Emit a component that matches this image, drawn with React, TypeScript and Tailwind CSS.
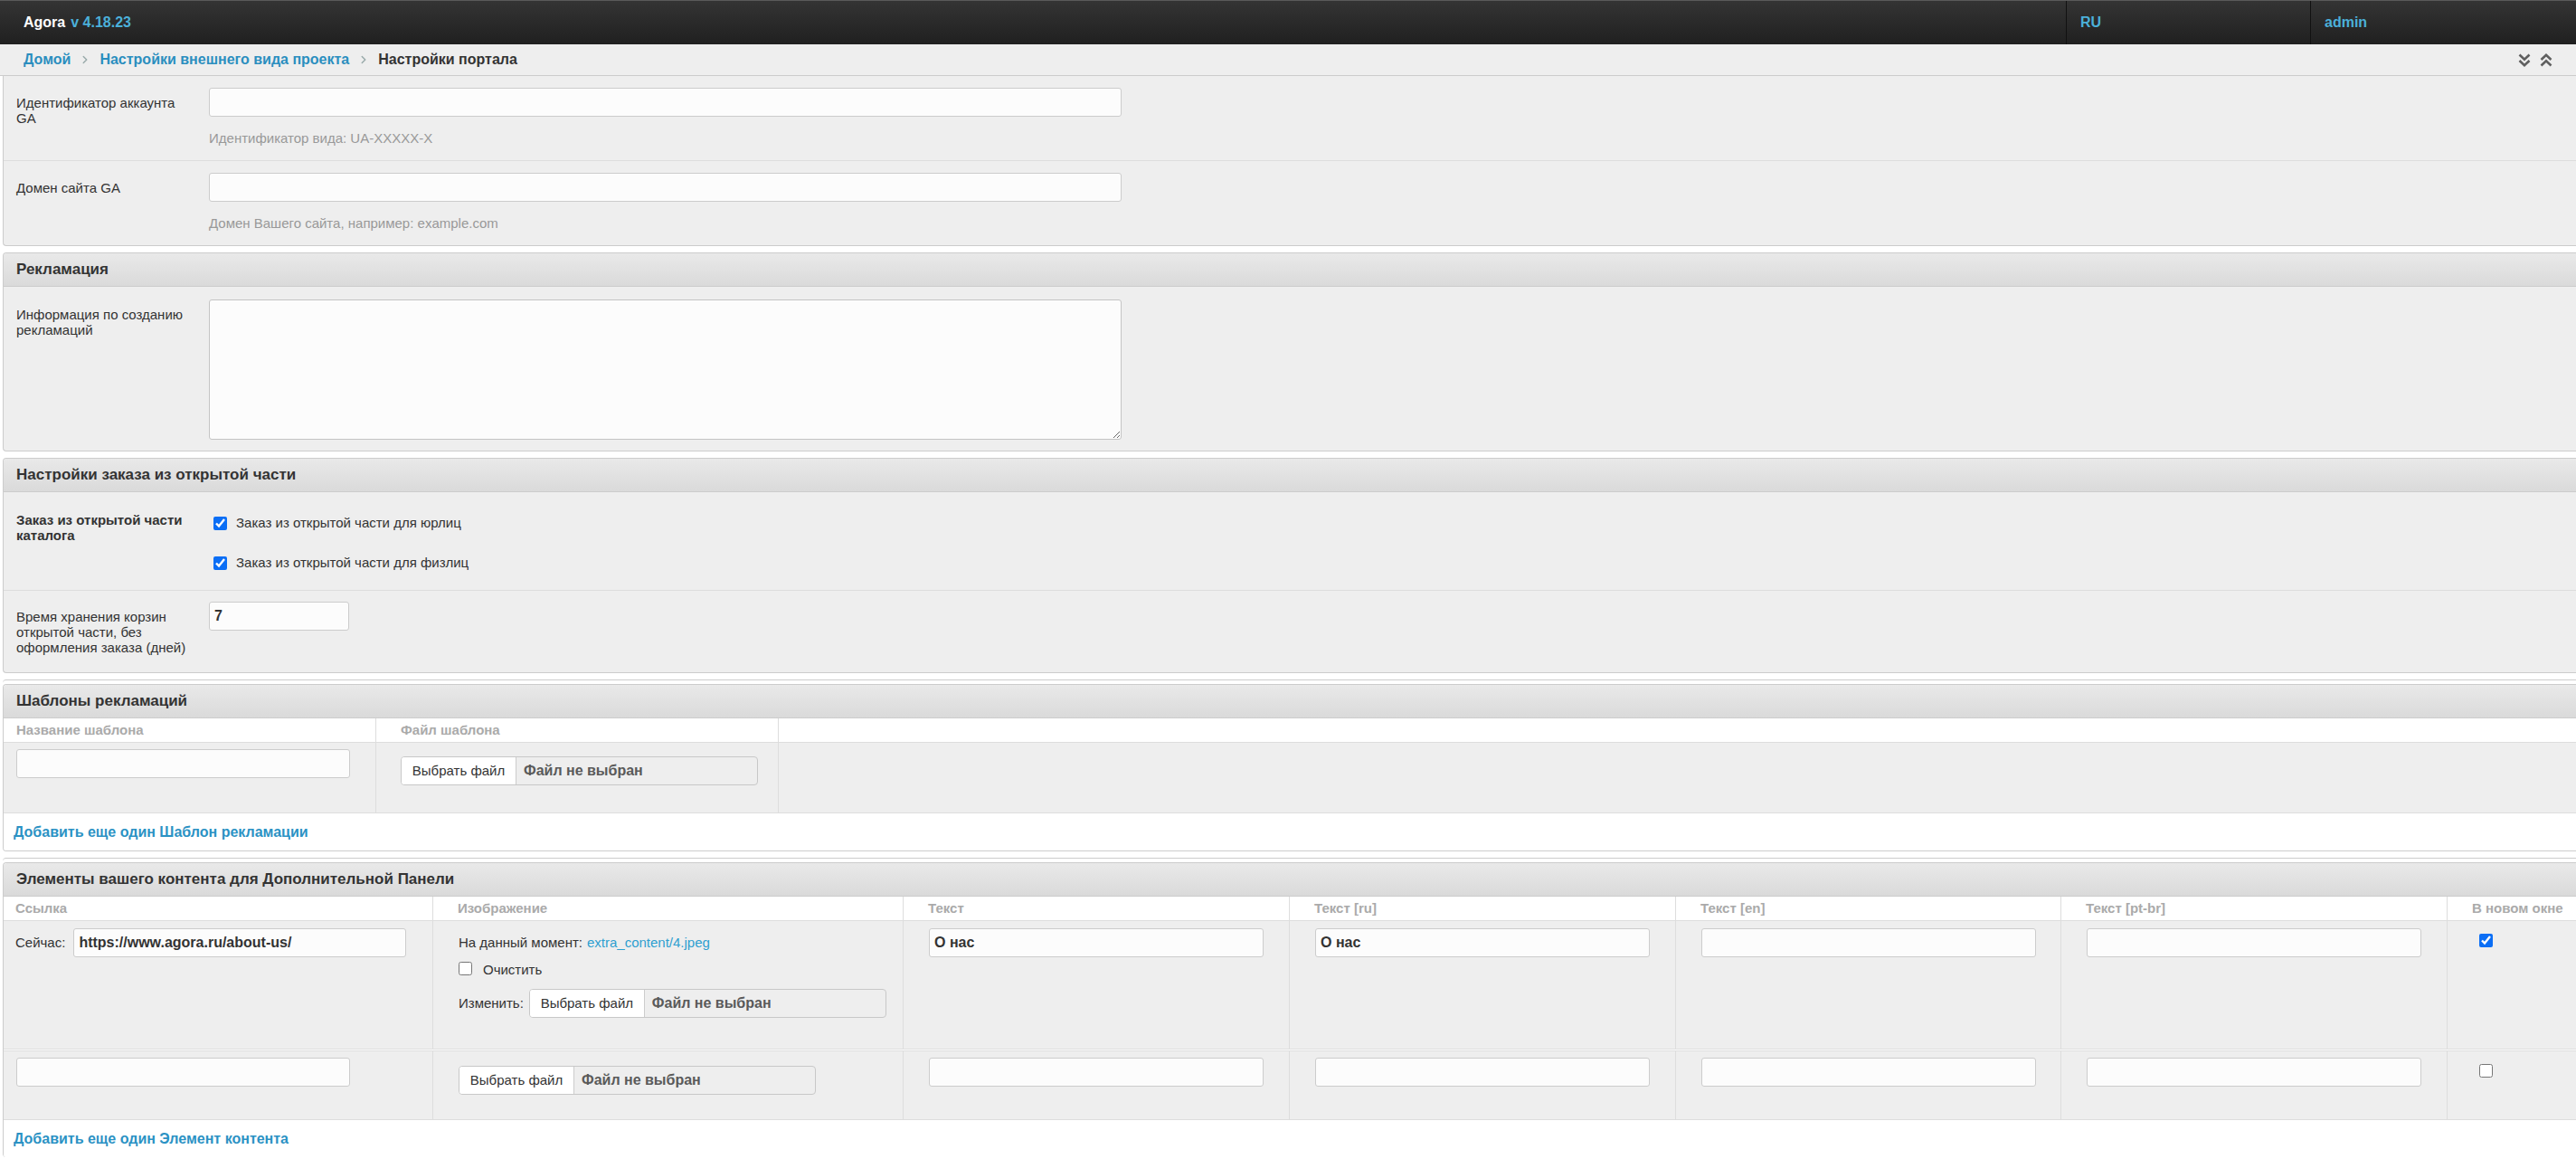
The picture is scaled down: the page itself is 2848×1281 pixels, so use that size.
import React from 'react';
import { ChevronRight } from 'lucide-react';

const Field: React.FC<{ value?: string; className?: string }> = ({ value = '', className = '' }) => (
  <input
    readOnly
    value={value}
    className={`h-[32px] rounded-[3px] border border-[#ccc] bg-[#fcfcfc] px-[5px] text-[16px] font-bold text-[#333] outline-none ${className}`}
  />
);

const FileField: React.FC = () => (
  <div className="flex h-[32px] w-[395px] overflow-hidden rounded-[4px] border border-[#c8c8c8] bg-[#eee]">
    <span className="flex w-[127px] items-center justify-center border-r border-[#ccc] bg-white text-[15px] text-[#333]">
      Выбрать файл
    </span>
    <span className="flex items-center pl-[8px] text-[16px] font-bold text-[#5a5a5a]">Файл не выбран</span>
  </div>
);

const Check: React.FC<{ checked?: boolean }> = ({ checked }) => (
  <input type="checkbox" readOnly checked={!!checked} className="h-[15px] w-[15px] shrink-0 accent-[#0b6ef5]" />
);

// double chevron, drawn as two polylines
const DoubleChevron: React.FC<{ up?: boolean }> = ({ up }) => (
  <svg width="14" height="15" viewBox="0 0 14 15" fill="none" stroke="#5f5f5f" strokeWidth="2.6" strokeLinejoin="miter">
    {up ? (
      <>
        <polyline points="1.5,7 7,1.8 12.5,7" />
        <polyline points="1.5,13.5 7,8.3 12.5,13.5" />
      </>
    ) : (
      <>
        <polyline points="1.5,1.5 7,6.7 12.5,1.5" />
        <polyline points="1.5,8 7,13.2 12.5,8" />
      </>
    )}
  </svg>
);

const PanelHeader: React.FC<{ title: string }> = ({ title }) => (
  <div className="flex h-[37px] items-center border-b border-[#ccc] bg-gradient-to-b from-[#e9e9e9] to-[#dadada] pl-[14px] text-[17px] font-bold text-[#333]">
    {title}
  </div>
);

const FormRow: React.FC<{ label: React.ReactNode; bold?: boolean; className?: string; children: React.ReactNode }> = ({
  label,
  bold,
  className = '',
  children,
}) => (
  <div className={`flex ${className}`}>
    <div className={`w-[227px] shrink-0 pl-[14px] pr-[23px] pt-[8px] text-[15px] leading-[17px] text-[#333] ${bold ? 'font-bold' : ''}`}>
      {label}
    </div>
    <div className="w-[1009px]">{children}</div>
  </div>
);

const Help: React.FC<{ children: React.ReactNode }> = ({ children }) => (
  <p className="mt-[15px] text-[15px] leading-[17px] text-[#999]">{children}</p>
);

const AddLink: React.FC<{ children: React.ReactNode }> = ({ children }) => (
  <div className="flex h-[41px] items-center bg-white pl-[11px]">
    <a className="text-[16px] font-bold text-[#2b92c4]">{children}</a>
  </div>
);

const contentCols = ['Ссылка', 'Изображение', 'Текст', 'Текст [ru]', 'Текст [en]', 'Текст [pt-br]', 'В новом окне'];

const App: React.FC = () => {
  return (
    <div className="min-h-screen bg-white font-['Liberation_Sans',Arial,sans-serif] text-[#333]">
      {/* top bar */}
      <header className="flex h-[49px] border-t border-[#5a5a5a] bg-gradient-to-b from-[#343434] to-[#202020]">
        <div className="flex flex-1 items-center pl-[26px] text-[16px] font-bold">
          <span className="text-white">Agora</span>
          <span className="ml-[6px] text-[#4bb0da]">v 4.18.23</span>
        </div>
        <div className="flex w-[270px] items-center border-l border-[#111] pl-[15px] text-[16px] font-bold text-[#4bb0da]">RU</div>
        <div className="flex w-[294px] items-center border-l border-[#111] pl-[15px] text-[16px] font-bold text-[#4bb0da]">admin</div>
      </header>

      {/* breadcrumbs */}
      <nav className="flex h-[35px] items-center border-b border-[#ccc] bg-[#eee] pl-[26px] pr-[26px] text-[16px] font-bold">
        <a className="text-[#2b8ebf]">Домой</a>
        <ChevronRight className="mx-[9px] h-[14px] w-[14px] text-[#9aa]" strokeWidth={2.5} />
        <a className="text-[#2b8ebf]">Настройки внешнего вида проекта</a>
        <ChevronRight className="mx-[9px] h-[14px] w-[14px] text-[#9aa]" strokeWidth={2.5} />
        <span className="text-[#333]">Настройки портала</span>
        <div className="ml-auto flex items-center gap-[10px]">
          <DoubleChevron />
          <DoubleChevron up />
        </div>
      </nav>

      <main className="pl-[3px]">
        {/* GA */}
        <section className="rounded-bl-[4px] border-b border-l border-[#ccc] bg-[#eee]">
          <FormRow label="Идентификатор аккаунта GA" className="border-b border-[#ddd] pb-[16px] pt-[13px]">
            <Field className="w-full" />
            <Help>Идентификатор вида: UA-XXXXX-X</Help>
          </FormRow>
          <FormRow label="Домен сайта GA" className="pb-[16px] pt-[13px]">
            <Field className="w-full" />
            <Help>Домен Вашего сайта, например: example.com</Help>
          </FormRow>
        </section>

        {/* Рекламация */}
        <section className="mt-[7px] overflow-hidden rounded-l-[4px] border-y border-l border-[#ccc] bg-[#eee]">
          <PanelHeader title="Рекламация" />
          <FormRow label="Информация по созданию рекламаций" className="pb-[12px] pt-[14px]">
            <textarea readOnly className="block h-[155px] w-full rounded-[3px] border border-[#c4c4c4] bg-[#fcfcfc] outline-none" />
          </FormRow>
        </section>

        {/* Настройки заказа */}
        <section className="mt-[7px] overflow-hidden rounded-l-[4px] border-y border-l border-[#ccc] bg-[#eee]">
          <PanelHeader title="Настройки заказа из открытой части" />
          <FormRow label="Заказ из открытой части каталога" bold className="border-b border-[#ddd] pb-[19px] pt-[14px]">
            <div className="flex flex-col gap-[22px] pt-[9px] text-[15px] text-[#333]">
              <label className="flex h-[22px] items-center gap-[10px] pl-[5px]">
                <Check checked />
                Заказ из открытой части для юрлиц
              </label>
              <label className="flex h-[22px] items-center gap-[10px] pl-[5px]">
                <Check checked />
                Заказ из открытой части для физлиц
              </label>
            </div>
          </FormRow>
          <FormRow label="Время хранения корзин открытой части, без оформления заказа (дней)" className="pb-[19px] pt-[12px]">
            <Field value="7" className="w-[155px]" />
          </FormRow>
        </section>

        {/* Шаблоны рекламаций */}
        <div className="mt-[7px] rounded-tl-[4px] border-t border-[#ccc] pt-[4px]">
          <section className="overflow-hidden rounded-l-[4px] border-y border-l border-[#ccc] bg-white">
            <PanelHeader title="Шаблоны рекламаций" />
            <div className="grid grid-cols-[412px_445px_1fr]">
              <div className="flex h-[27px] items-center border-b border-r border-[#ddd] pl-[14px] text-[15px] font-bold text-[#aaa]">Название шаблона</div>
              <div className="flex h-[27px] items-center border-b border-r border-[#ddd] pl-[27px] text-[15px] font-bold text-[#aaa]">Файл шаблона</div>
              <div className="h-[27px] border-b border-[#ddd]" />
              <div className="h-[78px] border-b border-r border-[#ddd] bg-[#eee] pl-[14px] pt-[7px]">
                <Field className="w-[369px]" />
              </div>
              <div className="h-[78px] border-b border-r border-[#ddd] bg-[#eee] pl-[27px] pt-[15px]">
                <FileField />
              </div>
              <div className="h-[78px] border-b border-[#ddd] bg-[#eee]" />
            </div>
            <AddLink>Добавить еще один Шаблон рекламации</AddLink>
          </section>
        </div>

        {/* Элементы контента */}
        <div className="mt-[7px] rounded-tl-[4px] border-t border-[#ccc] pt-[4px]">
          <section className="overflow-hidden rounded-l-[4px] border-t border-l border-[#ccc] bg-white">
            <PanelHeader title="Элементы вашего контента для Дополнительной Панели" />
            <div className="grid grid-cols-[475px_520px_427px_427px_426px_427px_1fr]">
              {contentCols.map((c, i) => (
                <div
                  key={c}
                  className={`flex h-[27px] items-center border-b border-[#ddd] text-[15px] font-bold text-[#aaa] ${i === 0 ? 'pl-[13px]' : 'pl-[27px]'} ${i < 6 ? 'border-r' : ''}`}
                >
                  {c}
                </div>
              ))}

              {/* row 1 */}
              <div className="flex h-[142px] items-start border-b border-r border-[#ddd] bg-[#eee] pl-[13px] pt-[8px]">
                <span className="mr-[9px] flex h-[32px] items-center text-[15px]">Сейчас:</span>
                <Field value="https://www.agora.ru/about-us/" className="w-[368px]" />
              </div>
              <div className="h-[142px] border-b border-r border-[#ddd] bg-[#eee] pl-[28px] pt-[15px] text-[15px]">
                <div className="flex h-[18px] items-center">
                  На данный момент:<a className="ml-[5px] text-[#2f9fd0]">extra_content/4.jpeg</a>
                </div>
                <label className="mt-[8px] flex h-[22px] items-center gap-[12px]">
                  <Check />
                  <span className="pt-[4px]">Очистить</span>
                </label>
                <div className="mt-[12px] flex items-center gap-[6px]">
                  Изменить:
                  <FileField />
                </div>
              </div>
              {['О нас', 'О нас', '', ''].map((v, i) => (
                <div key={i} className="h-[142px] border-b border-r border-[#ddd] bg-[#eee] pl-[28px] pt-[8px]">
                  <Field value={v} className="w-[370px]" />
                </div>
              ))}
              <div className="h-[142px] border-b border-[#ddd] bg-[#eee] pl-[35px] pt-[12px]">
                <Check checked />
              </div>

              {/* row 2 */}
              {contentCols.map((c) => (
                <div key={'s' + c} className="h-[2px] border-b border-[#ddd] bg-white" />
              ))}
              <div className="h-[76px] border-b border-r border-[#ddd] bg-[#eee] pl-[14px] pt-[7px]">
                <Field className="w-[369px]" />
              </div>
              <div className="h-[76px] border-b border-r border-[#ddd] bg-[#eee] pl-[28px] pt-[16px]">
                <FileField />
              </div>
              {[0, 1, 2, 3].map((i) => (
                <div key={i} className="h-[76px] border-b border-r border-[#ddd] bg-[#eee] pl-[28px] pt-[7px]">
                  <Field className="w-[370px]" />
                </div>
              ))}
              <div className="h-[76px] border-b border-[#ddd] bg-[#eee] pl-[35px] pt-[12px]">
                <Check />
              </div>
            </div>
            <AddLink>Добавить еще один Элемент контента</AddLink>
          </section>
        </div>
      </main>
    </div>
  );
};

export default App;
